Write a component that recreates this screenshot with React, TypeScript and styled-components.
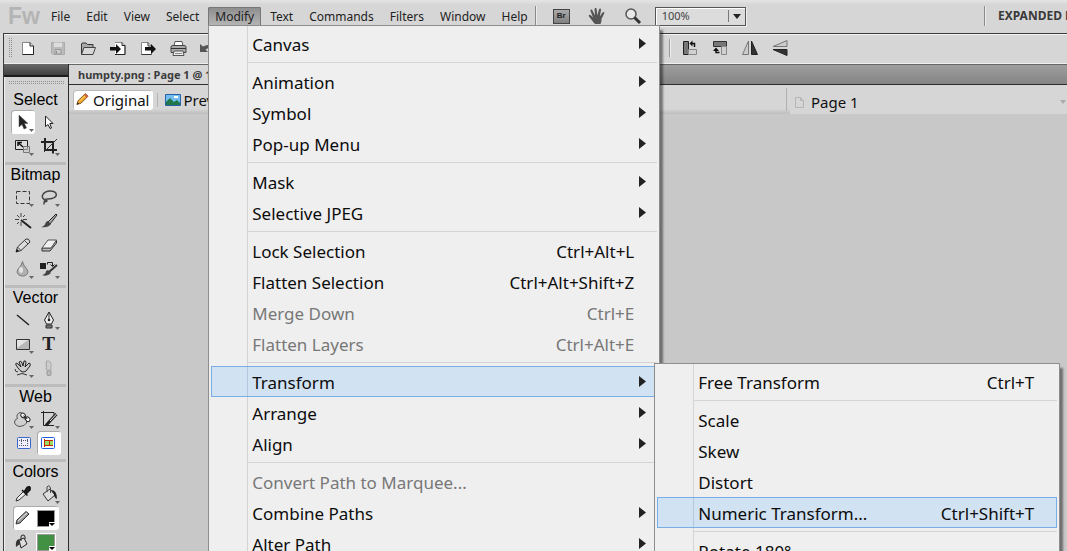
import React from "react";
import styled, { createGlobalStyle, css } from "styled-components";

const ui = `"Noto Sans", "Open Sans", sans-serif`;

const Global = createGlobalStyle`
  * { box-sizing: border-box; }
  body { margin: 0; background: #c8c8c8; font-family: ${ui}; color: #111; }
  button, select { font: inherit; color: inherit; border: 0; padding: 0; background: none; }
  svg { display: block; flex: none; }
`;

const Window = styled.div`
  display: flex;
  flex-direction: column;
  height: 100vh;
  overflow: hidden;
  background: #c8c8c8;
`;

/* Menu bar */

const MenuBar = styled.header`
  display: flex;
  align-items: flex-start;
  flex: none;
  height: 33px;
  padding-left: 8px;
  overflow: visible;
  white-space: nowrap;
  background: linear-gradient(#e4e4e4, #d6d6d6 5px);
`;

const Logo = styled.span`
  width: 36px;
  font: bold 23px/32px "Liberation Sans", sans-serif;
  color: #b4b4b4;
`;

const MenuList = styled.nav`
  display: flex;
  gap: 2px;
  padding-top: 7px;
`;

const MenuEntry = styled.div`
  position: relative;
`;

const MenuButton = styled.button<{ $open?: boolean }>`
  display: block;
  height: 18px;
  padding: 1px 7px 0;
  font-size: 12px;
  line-height: 17px;
  color: #222;
  ${(p) =>
    p.$open &&
    css`
      background: linear-gradient(#8c8c8c, #b4b4b4);
      box-shadow: inset 1px 1px #777, inset -1px 0 #777;
      border-radius: 2px 2px 0 0;
    `}
`;

const BarRule = styled.span`
  flex: none;
  width: 1px;
  height: 20px;
  margin-top: 6px;
  background: #8a8a8a;
  box-shadow: 1px 0 #ececec;
`;

const AppTools = styled.div`
  display: flex;
  align-items: center;
  gap: 18px;
  height: 32px;
  padding-left: 17px;
`;

const Bridge = styled.button`
  width: 17px;
  height: 15px;
  border: 1px solid #444;
  font: bold 8px/12px "Liberation Sans", sans-serif;
  text-align: center;
  color: #222;
  background: linear-gradient(#aaa, #808080);
`;

const PlainButton = styled.button`
  width: 18px;
  height: 18px;
`;

const ZoomBox = styled.label`
  display: flex;
  align-items: center;
  width: 91px;
  height: 19px;
  margin-left: -5px;
  padding-right: 4px;
  border: 1px solid #555;
  background: #dcdcdc;
  box-shadow: inset 1px 1px #fff, 1px 1px #f0f0f0;

  select {
    flex: 1;
    padding-left: 6px;
    appearance: none;
    outline: 0;
    font: 11px/16px ${ui};
    color: #444;
  }
  svg { border-left: 1px solid #777; }
`;

const Mode = styled.div`
  display: flex;
  flex: none;
  width: 83px;
  margin-left: auto;
  overflow: hidden;

  button {
    padding-left: 13px;
    font-size: 12px;
    font-weight: bold;
    line-height: 31px;
    color: #3a3a3a;
  }
`;

/* Drop-down menus */

const Menu = styled.div<{ $sub?: boolean }>`
  position: absolute;
  z-index: ${(p) => (p.$sub ? 3 : 2)};
  top: ${(p) => (p.$sub ? "-3px" : "18px")};
  left: ${(p) => (p.$sub ? "443px" : "0")};
  width: ${(p) => (p.$sub ? "406px" : "452px")};
  padding: 2px;
  border: 1px solid #8e8e8e;
  background: linear-gradient(90deg, transparent 38px, #d4d4d4 38px, #d4d4d4 39px, transparent 39px) #efefef;
  box-shadow: 3px 5px 2px rgba(0, 0, 0, 0.45);
`;

const MenuRow = styled.button<{ $hot?: boolean }>`
  display: flex;
  align-items: center;
  width: 100%;
  height: 31px;
  padding: 2px 10px 0 40px;
  border: 1px solid transparent;
  font-size: 17px;
  line-height: 24px;
  text-align: left;
  color: #0c0c0c;
  &:disabled { color: #777; }
  ${(p) =>
    p.$hot &&
    css`
      border-color: #78aee5;
      background: linear-gradient(90deg, transparent 35px, #b3c8dd 35px, #b3c8dd 36px, transparent 36px) #d1e2f2;
    `}
`;

const Shortcut = styled.span`
  margin-left: auto;
  padding-right: 12px;
`;

const MenuRule = styled.hr`
  height: 1px;
  margin: 3px 0 3px 37px;
  border: 0;
  background: #d4d4d4;
`;

const SubArrow = styled.svg`
  margin-left: auto;
`;

type Item =
  | null
  | { label: string; keys?: string; off?: boolean; more?: boolean; hot?: boolean; sub?: Item[] };

function MenuPanel({ items, sub }: { items: Item[]; sub?: boolean }) {
  return (
    <Menu $sub={sub} role="menu">
      {items.map((it, i) =>
        it === null ? (
          <MenuRule key={i} />
        ) : (
          <MenuEntry key={i}>
            <MenuRow $hot={it.hot} disabled={it.off} role="menuitem">
              {it.label}
              {it.keys && <Shortcut>{it.keys}</Shortcut>}
              {it.more && (
                <SubArrow width="7" height="14">
                  <path d="M0 0L7 5.500L0 11Z" fill="#222" />
                </SubArrow>
              )}
            </MenuRow>
            {it.sub && <MenuPanel items={it.sub} sub />}
          </MenuEntry>
        )
      )}
    </Menu>
  );
}

const transformItems: Item[] = [
  { label: "Free Transform", keys: "Ctrl+T" },
  null,
  { label: "Scale" },
  { label: "Skew" },
  { label: "Distort" },
  { label: "Numeric Transform...", keys: "Ctrl+Shift+T", hot: true },
  null,
  { label: "Rotate 180°" },
];

const modifyItems: Item[] = [
  { label: "Canvas", more: true },
  null,
  { label: "Animation", more: true },
  { label: "Symbol", more: true },
  { label: "Pop-up Menu", more: true },
  null,
  { label: "Mask", more: true },
  { label: "Selective JPEG", more: true },
  null,
  { label: "Lock Selection", keys: "Ctrl+Alt+L" },
  { label: "Flatten Selection", keys: "Ctrl+Alt+Shift+Z" },
  { label: "Merge Down", keys: "Ctrl+E", off: true },
  { label: "Flatten Layers", keys: "Ctrl+Alt+E", off: true },
  null,
  { label: "Transform", more: true, hot: true, sub: transformItems },
  { label: "Arrange", more: true },
  { label: "Align", more: true },
  null,
  { label: "Convert Path to Marquee...", off: true },
  { label: "Combine Paths", more: true },
  { label: "Alter Path", more: true },
];

/* Main toolbar */

const Frame = styled.div`
  display: flex;
  flex: 1;
  flex-direction: column;
  min-height: 0;
  margin-left: 3px;
  border-top: 1px solid #3c3c3c;
  border-left: 1px solid #3c3c3c;
  box-shadow: -4px 0 #dcdcdc;
`;

const Toolbar = styled.div`
  display: flex;
  align-items: center;
  flex: none;
  height: 30px;
  padding: 0 0 2px 4px;
  background: #d6d6d6;
  box-shadow: inset 0 1px #f4f4f4, inset 0 -1px #eee;
`;

const Grip = styled.span<{ $wide?: boolean }>`
  flex: none;
  width: ${(p) => (p.$wide ? "56px" : "4px")};
  height: ${(p) => (p.$wide ? "4px" : "20px")};
  background: conic-gradient(#909090 25%, transparent 0) 0 0 / 2px 2px;
`;

const ToolGroup = styled.div<{ $end?: boolean }>`
  display: flex;
  gap: 12px;
  padding-left: ${(p) => (p.$end ? "11px" : "7px")};
  ${(p) =>
    p.$end &&
    css`
      margin-left: 452px;
      border-left: 1px solid #999;
      box-shadow: inset 1px 0 #f0f0f0;
    `}
`;

/* Workspace */

const Workspace = styled.div`
  display: flex;
  flex: 1;
  min-height: 0;
`;

const Side = styled.aside`
  display: flex;
  flex-direction: column;
  flex: none;
  width: 64px;
  padding: 0 2px 0 1px;
  background: #d4d4d4;
  box-shadow: inset 1px 0 #f0f0f0;
`;

const SideHead = styled.div`
  flex: none;
  height: 13px;
  margin: 0 -2px 4px -1px;
  border-bottom: 2px solid #1c1c1c;
  background: linear-gradient(#6a6a6a, #3f3f3f);
`;

const SideGrip = styled.div`
  display: flex;
  flex: none;
  justify-content: center;
  height: 8px;
`;

const SideTools = styled.div`
  padding-top: 1px;
`;

const Section = styled.section`
  padding-bottom: 4px;
  border-bottom: 3px solid #bcbcbc;
`;

const SectionTitle = styled.h2`
  margin: 0;
  font: 16px/20px "Liberation Sans", sans-serif;
  text-align: center;
  color: #000;
`;

const ToolGrid = styled.div`
  display: grid;
  grid-template-columns: 26px 26px;
  grid-auto-rows: 24px;
  justify-content: center;
`;

const Tool = styled.button<{ $on?: boolean }>`
  position: relative;
  display: flex;
  align-items: center;
  justify-content: center;
  margin: 0 1px;
  border-radius: 3px;
  ${(p) =>
    p.$on &&
    css`
      background: #fff;
      box-shadow: inset 1px 1px #aaa;
    `}
`;

const More = styled.svg`
  position: absolute;
  right: 1px;
  bottom: 2px;
`;

const ColorRow = styled.div<{ $on?: boolean }>`
  display: flex;
  align-items: center;
  gap: 6px;
  height: 24px;
  width: 46px;
  margin: 0 auto;
  border-radius: 3px;
  ${(p) => p.$on && css`background: #fff; box-shadow: inset 1px 1px #aaa;`}
`;

const Swatch = styled.button<{ $color: string }>`
  position: relative;
  width: 18px;
  height: 17px;
  border: 1px solid #999;
  outline: 1px solid #fff;
  background: ${(p) => p.$color};
`;

const SwatchMark = styled.svg`
  position: absolute;
  right: -1px;
  bottom: -1px;
  background: #fff;
`;

const Doc = styled.main`
  flex: 1;
  min-width: 0;
  border-left: 1px solid #2b2b2b;
  background: #c8c8c8;
`;

const TabStrip = styled.div`
  height: 21px;
  border-top: 1px solid #666;
  border-bottom: 1px solid #2e2e2e;
  background: linear-gradient(#9d9d9d, #858585);
`;

const DocTab = styled.button`
  display: block;
  height: 19px;
  padding: 0 9px;
  font-size: 11px;
  font-weight: bold;
  line-height: 19px;
  color: #3c3c3c;
  background: #d6d6d6;
`;

const DocBar = styled.div`
  display: flex;
  align-items: center;
  height: 29px;
  padding-left: 4px;
  background: linear-gradient(#d6d6d6 24px, #bdbdbd);
`;

const ViewTab = styled.button<{ $on?: boolean }>`
  display: flex;
  align-items: center;
  gap: 2px;
  height: 20px;
  padding: 0 4px 0 3px;
  border-radius: 3px;
  font-size: 15px;
  line-height: 20px;
  ${(p) => p.$on && css`background: #fff; box-shadow: inset 1px 1px #bbb;`}
`;

const DocRule = styled.span`
  width: 1px;
  height: 14px;
  margin: 0 4px;
  background: #b4b4b4;
`;

const PagePicker = styled.div`
  display: flex;
  flex: 0 0 281px;
  align-items: center;
  align-self: stretch;
  margin-left: auto;

  button {
    display: flex;
    flex: 1;
    align-items: center;
    gap: 7px;
    height: 29px;
    padding: 5px 1px 0 5px;
    font-size: 15px;
    background: #d6d6d6;
  }
  button svg:last-child { margin-left: auto; }
`;

const PickerRule = styled.span`
  width: 1px;
  height: 23px;
  margin-right: 3px;
  background: #b0b0b0;
`;

/* Icons */

const icons: Record<string, React.ReactNode> = {
  hand: <path d="M6 16L1 9.500C0 8 2 7 3 8.500L5 10.500L2.500 4C2 2.500 4 2 4.500 3.500L7 8.500L6.500 2C6.500.5 8.500.5 8.700 2L9.200 8.500L11 2.500C11.500 1 13.300 1.500 13 3L11.800 9.500L14.500 5.500C15.500 4.300 17 5.300 16.200 6.500L13.500 12V14L12.500 17H7Z" fill="#555" />,
  glass: <><circle cx="7" cy="7" r="5" fill="#e8e8e8" stroke="#555" strokeWidth="1.500" /><path d="M10.500 10.500L16 16" stroke="#333" strokeWidth="3" /></>,
  new: <><path d="M3.500 3.500H11L14.500 7V15.500H3.500Z" fill="#fff" stroke="#888" /><path d="M11 3.500V7H14.500M3.500 15.500H14.500V7" fill="none" stroke="#222" /></>,
  save: <><path d="M2.500 3.500H15.500V15.500H4L2.500 14Z" fill="#bbb" stroke="#aaa" /><path d="M5 3.500H13V8H5Z" fill="#ddd" /><path d="M6 10.500H12V15H6Z" fill="#ccc" stroke="#999" /><path d="M7.500 12V14.500" stroke="#888" /></>,
  open: <><path d="M2.500 15.500V5Q2.500 4 4 4H7L8.500 5.500H14V9" fill="#aaa" stroke="#333" /><path d="M2.500 15.500L5 8.500H16.500L14 15.500Z" fill="#d8d8d8" stroke="#444" /></>,
  imp: <><path d="M6 3.500H13L16 6.500V15.500H6" fill="#fff" stroke="#888" /><path d="M13 3.500V6.500H16V15.500H6" fill="none" stroke="#222" /><path d="M1 8H7V5L12 10L7 15V11.500H1Z" fill="#111" /></>,
  exp: <><path d="M2.500 3.500H9L12.500 7V15.500H2.500Z" fill="#fff" stroke="#888" /><path d="M2.500 15.500H12.500M9 3.500V7H12.500" fill="none" stroke="#333" /><path d="M6 8H12V5L17 10L12 15V11.500H6Z" fill="#111" /></>,
  print: <><path d="M5 7L6 2.500H13L14 7" fill="#fff" stroke="#555" /><path d="M2 8Q2 6.500 4 6.500H15Q17 6.500 17 8V13.500H2Z" fill="#aaa" stroke="#444" /><path d="M2 9.500H17M4 13.500H15" stroke="#333" /><path d="M5 12H14L15 16.500H4Z" fill="#eee" stroke="#555" /><path d="M6 14.500H13" stroke="#888" /></>,
  undo: <path d="M1 5V13H9L6.500 10.500Q11 7.500 16 12Q12 3 4 7.500Z" fill="#555" />,
  ccw: <><path d="M2.500 2.500H7.500V15.500H2.500Z" fill="#777" stroke="#222" /><path d="M7.500 10.500H15.500V15.500H7.500Z" fill="#d0d0d0" stroke="#888" /><path d="M13.500 8V4.500H11" fill="none" stroke="#111" strokeWidth="1.500" /><path d="M11.500 1.500V7.500L8.500 4.500Z" fill="#111" /></>,
  cw: <><path d="M2.500 2.500H15.500V7.500H2.500Z" fill="#777" stroke="#333" /><path d="M10.500 7.500H15.500V15.500H10.500Z" fill="#d0d0d0" stroke="#888" /><path d="M8.500 13.500H5V11" fill="none" stroke="#111" strokeWidth="1.500" /><path d="M2 12L5 8.500L8 12Z" fill="#111" /></>,
  fliph: <><path d="M7.500 2V15.500H1.500Z" fill="#ccc" stroke="#777" /><path d="M10.500 2V15.500H16.500Z" fill="#333" stroke="#222" /></>,
  flipv: <><path d="M16 1.500V7.500H2Z" fill="#ccc" stroke="#777" /><path d="M16 16.500V10.500H2Z" fill="#333" stroke="#222" /></>,
  pointer: <path d="M5 2V14L8 11.500L10 16L12.500 15L10.500 10.500H14Z" fill="#222" stroke="#555" strokeWidth=".5" />,
  subselect: <path d="M5.500 3V13.500L8 11.500L10 15.500L11.500 15L9.800 10.500H13Z" fill="#fff" stroke="#222" />,
  scale: <><path d="M1.500 3.500H13.500V12.500H1.500Z" fill="#ddd" stroke="#222" /><path d="M4 9V5.500H8M4 5.500L9 10" fill="none" stroke="#111" strokeWidth="1.500" /><path d="M9.500 9.500H15.500V15.500H9.500Z" fill="#ccc" fillOpacity=".6" stroke="#777" /></>,
  crop: <><path d="M5 1V13H17M1 5H13V16.500" fill="none" stroke="#222" strokeWidth="2" /><path d="M4 15L17 2" stroke="#333" /></>,
  marquee: <path d="M2.500 3.500H15.500V15.500H2.500Z" fill="none" stroke="#333" strokeDasharray="4 2" />,
  lasso: <path d="M5 12C-1 9 4 3 10 3C18 3 18 9 12 10.500C8 11.500 4 10.500 4.500 12.500C5 14.500 8 13.500 6.500 12Q4 11 4 16.500" fill="none" stroke="#444" strokeWidth="1.500" />,
  wand: <><path d="M7 8L17 16" stroke="#222" strokeWidth="2" /><path d="M7 1V5M7 10V14M1 7.500H5M9 7.500H13M3 3L5.500 5.500M11 3L9 5M3 12L5 10" stroke="#444" /></>,
  brush: <><path d="M8 10L16 2L17 3L10 12Z" fill="#aaa" stroke="#222" /><path d="M8 9L11 12Q8 16 1 15Q5 14 5.500 11Q6.500 9 8 9Z" fill="#444" /></>,
  pencil: <><path d="M2 16L3.500 11L12 3Q15 2 16 6L7 14.500Z" fill="#ddd" stroke="#333" /><path d="M3.500 11L7 14.500M10.500 4.500L14 8" stroke="#444" /><path d="M2 16L3 13L5 15Z" fill="#111" /></>,
  eraser: <><path d="M2 12V15H10L16.500 7V4L11 12Z" fill="#bbb" stroke="#333" /><path d="M2 12L8 4H16.500L11 12Z" fill="#f0f0f0" stroke="#555" /></>,
  drop: <><path d="M8.500 1.500Q9 5 12.500 8.500C16 13 12 16 8.500 16S1 13 4.500 8.500Q8 5 8.500 1.500Z" fill="#b0b0b0" stroke="#777" /><ellipse cx="7" cy="10" rx="2" ry="3" fill="#e4e4e4" /></>,
  replace: <><path d="M0 3H6V9H0Z" fill="#222" /><path d="M7.500 4.500V2.500H12.500V6M10.500 4.500L12.500 6.500L14.500 4.500" fill="none" stroke="#222" /><path d="M9 12L17 5" stroke="#333" strokeWidth="2" /><path d="M8 10L11 13Q7 17 2 15Q6 14 6 11Z" fill="#444" /></>,
  line: <path d="M3 4L15 14" stroke="#222" strokeWidth="1.500" />,
  pen: <><path d="M9 1L13.500 9L11.500 13H6.500L4.500 9Z" fill="#eee" stroke="#222" /><path d="M9 1V9M6 14H12V17H6Z" fill="#777" stroke="#333" /><circle cx="9" cy="9" r="1.300" fill="#222" /></>,
  rect: <><path d="M2.500 4.500H15.500V14.500H2.500Z" fill="#b8b8b8" stroke="#333" /><path d="M3 13V5H14Z" fill="#e4e4e4" /></>,
  freeform: <><path d="M4 9L2 6Q1 3 4 5L7 8L5 3Q7 1 8 4L9 7L10 2Q12 1 12 4L11 8L15 4Q17 4 16 7L12 12Q8 15 4 9Z" fill="#ccc" stroke="#222" /><path d="M1 10Q1 13 4 13M3 16Q8 13 13 16" fill="none" stroke="#333" /></>,
  knife: <><path d="M6.500 2Q11 1 11 6V11H6.500Z" fill="#ccc" stroke="#aaa" /><path d="M7 12H11V16Q9 17 7 16Z" fill="#bbb" stroke="#999" /><path d="M6 3V11" stroke="#aaa" strokeDasharray="1 1" /></>,
  hotspot: <><path d="M6 2.500A4 4 0 0 1 9.500 8Q14 10 12.500 13T6 16.500Q1 16 .5 12Q1 9 3.500 8.500A4 4 0 0 1 6 2.500Z" fill="#d0d0d0" stroke="#555" /><g transform="rotate(40 11 7)"><rect x="6" y="5" width="5" height="4" rx="2" fill="#fff" stroke="#222" /><rect x="12" y="5" width="5" height="4" rx="2" fill="#fff" stroke="#222" /><path d="M9 7H14" stroke="#222" /></g></>,
  slice: <><path d="M3.500 1V15.500H14M1 2.500H14V8" fill="none" stroke="#222" /><path d="M16.500 4L10 11L6 15.500" fill="none" stroke="#222" strokeWidth="3" /><path d="M16.500 4L10 11" stroke="#eee" /></>,
  hide: <><rect x="3.500" y="3.500" width="13" height="11" rx="1" fill="#eef" stroke="#3867cc" /><path d="M5 6.500H15M5 11.500H15M7.500 5V13M13.500 5V13" stroke="#555" strokeDasharray="1 1" /></>,
  show: <><rect x="1.500" y="3.500" width="13" height="11" rx="1" fill="#fff" stroke="#225fe0" /><path d="M5 7H13V11H5Z" fill="#9bdc62" /><path d="M4.500 5V13M5 6.500H13M5 11.500H13M9.500 7V11" stroke="#c42800" /></>,
  dropper: <><path d="M2 16L3 13L9.500 6.500L12 9L5 15Z" fill="#eee" stroke="#333" /><path d="M8 5L13.500 10.500M10.500 6.500L13 2.500Q17 0 16 5L12 9" stroke="#111" fill="#222" strokeWidth="1.500" /></>,
  bucket: <><path d="M3 9L10 4L15 10L8 16Z" fill="#ddd" stroke="#333" /><path d="M7 7V2Q9-1 10.500 3V8" fill="none" stroke="#444" /><path d="M11 5Q17 5 17 14Q14 13 14 9Z" fill="#222" /></>,
  stroke: <><path d="M3 15L4 11L13 2.500L16 5L7 14Z" fill="#999" stroke="#333" /><path d="M5 12L14 4" stroke="#eee" /></>,
  fill: <><path d="M6 7L11 5L14 11L8 15Z" fill="#ddd" stroke="#222" /><path d="M6 6Q2 7 3 14L7 11Z" fill="#333" /><path d="M8 8V4Q8 2 10 2T12 4V6" stroke="#222" /></>,
  crayon: <><path d="M1 15L2.500 10.500L11 2L14.500 5L6 13.500Z" fill="#f0a428" stroke="#714310" /><path d="M11 2L14.500 5L13 6.500L9.500 3.500Z" fill="#d65545" /><path d="M1 15L2 12.500L4 14Z" fill="#222" /><path d="M4 11L11 4.500" stroke="#ffe27a" /></>,
};

const Icon = ({ name, size = 18 }: { name: string; size?: number }) => (
  <svg width={size} height={size} viewBox="0 0 18 18" fill="none" aria-hidden>
    {icons[name]}
  </svg>
);

const PictureIcon = () => (
  <svg width="16" height="12" aria-hidden>
    <path d="M.5.5H15.500V11.500H.5Z" fill="#73bdf0" stroke="#2861a8" />
    <path d="M1 8L5 4L9 8L12 6L15 9V11H1Z" fill="#21764a" />
    <path d="M9 3H13" stroke="#fff" strokeWidth="2" />
  </svg>
);

const TypeGlyph = styled.span`
  font: bold 19px/20px "Liberation Serif", serif;
  color: #222;
`;

type ToolDef = { id: string; title: string; more?: boolean; on?: boolean };

const t = (id: string, title: string, more = false, on = false): ToolDef => ({ id, title, more, on });

const sections: { title: string; tools: ToolDef[] }[] = [
  { title: "Select", tools: [t("pointer", "Pointer", true, true), t("subselect", "Subselection"), t("scale", "Scale", true), t("crop", "Crop", true)] },
  {
    title: "Bitmap",
    tools: [t("marquee", "Marquee", true), t("lasso", "Lasso", true), t("wand", "Magic Wand"), t("brush", "Brush"), t("pencil", "Pencil"), t("eraser", "Eraser"), t("drop", "Blur", true), t("replace", "Replace Color", true)],
  },
  { title: "Vector", tools: [t("line", "Line"), t("pen", "Pen", true), t("rect", "Rectangle", true), t("type", "Text"), t("freeform", "Freeform", true), t("knife", "Knife")] },
  { title: "Web", tools: [t("hotspot", "Hotspot", true), t("slice", "Slice", true), t("hide", "Hide slices"), t("show", "Show slices", false, true)] },
];

const ToolButton = ({ tool }: { tool: ToolDef }) => (
  <Tool $on={tool.on} aria-label={tool.title}>
    {tool.id === "type" ? <TypeGlyph>T</TypeGlyph> : <Icon name={tool.id} />}
    {tool.more && (
      <More width="5" height="3">
        <path d="M0 0H5L2.500 3Z" fill="#666" />
      </More>
    )}
  </Tool>
);

const ColorPick = ({ icon, color, on }: { icon: string; color: string; on?: boolean }) => (
  <ColorRow $on={on}>
    <PlainButton aria-label={icon}>
      <Icon name={icon} />
    </PlainButton>
    <Swatch $color={color} aria-label={`${icon} color`}>
      <SwatchMark width="6" height="5">
        <path d="M0 1H6L3 4Z" fill="#000" />
      </SwatchMark>
    </Swatch>
  </ColorRow>
);

const IconButtons = ({ names }: { names: string[] }) => (
  <>
    {names.map((n) => (
      <PlainButton key={n} aria-label={n}>
        <Icon name={n} />
      </PlainButton>
    ))}
  </>
);

const menus = ["File", "Edit", "View", "Select", "Modify", "Text", "Commands", "Filters", "Window", "Help"];

export default function App() {
  return (
    <Window>
      <Global />
      <MenuBar>
        <Logo>Fw</Logo>
        <MenuList>
          {menus.map((m) => (
            <MenuEntry key={m}>
              <MenuButton $open={m === "Modify"}>{m}</MenuButton>
              {m === "Modify" && <MenuPanel items={modifyItems} />}
            </MenuEntry>
          ))}
        </MenuList>
        <BarRule />
        <AppTools>
          <Bridge>Br</Bridge>
          <IconButtons names={["hand", "glass"]} />
          <ZoomBox>
            <select aria-label="Zoom">
              <option>100%</option>
            </select>
            <svg width="13" height="12">
              <path d="M4 4H12L8 9Z" fill="#222" />
            </svg>
          </ZoomBox>
        </AppTools>
        <Mode>
          <BarRule />
          <button>EXPANDED MODE</button>
        </Mode>
      </MenuBar>
      <Frame>
        <Toolbar>
          <Grip />
          <ToolGroup>
            <IconButtons names={["new", "save", "open", "imp", "exp", "print", "undo"]} />
          </ToolGroup>
          <ToolGroup $end>
            <IconButtons names={["ccw", "cw", "fliph", "flipv"]} />
          </ToolGroup>
        </Toolbar>
        <Workspace>
          <Side>
            <SideHead />
            <SideGrip>
              <Grip $wide />
            </SideGrip>
            <SideTools>
              {sections.map((s) => (
                <Section key={s.title}>
                  <SectionTitle>{s.title}</SectionTitle>
                  <ToolGrid>
                    {s.tools.map((tool) => (
                      <ToolButton key={tool.id} tool={tool} />
                    ))}
                  </ToolGrid>
                </Section>
              ))}
              <Section>
                <SectionTitle>Colors</SectionTitle>
                <ToolGrid>
                  <ToolButton tool={t("dropper", "Eyedropper")} />
                  <ToolButton tool={t("bucket", "Paint Bucket", true)} />
                </ToolGrid>
                <ColorPick icon="stroke" color="#000" on />
                <ColorPick icon="fill" color="#429042" />
              </Section>
            </SideTools>
          </Side>
          <Doc>
            <TabStrip>
              <DocTab>humpty.png : Page 1 @ 100%</DocTab>
            </TabStrip>
            <DocBar>
              <ViewTab $on>
                <Icon name="crayon" size={15} />
                Original
              </ViewTab>
              <DocRule />
              <ViewTab>
                <PictureIcon />
                Preview
              </ViewTab>
              <PagePicker>
                <PickerRule />
                <button>
                  <svg width="9" height="11" aria-hidden>
                    <path d="M.5.5H5.500L8.500 3.500V10.500H.5ZM5.500.5V3.500H8.500" fill="none" stroke="#b5b5b5" />
                  </svg>
                  Page 1
                  <svg width="6" height="4" aria-hidden>
                    <path d="M0 0H6L3 4Z" fill="#aaa" />
                  </svg>
                </button>
              </PagePicker>
            </DocBar>
          </Doc>
        </Workspace>
      </Frame>
    </Window>
  );
}
